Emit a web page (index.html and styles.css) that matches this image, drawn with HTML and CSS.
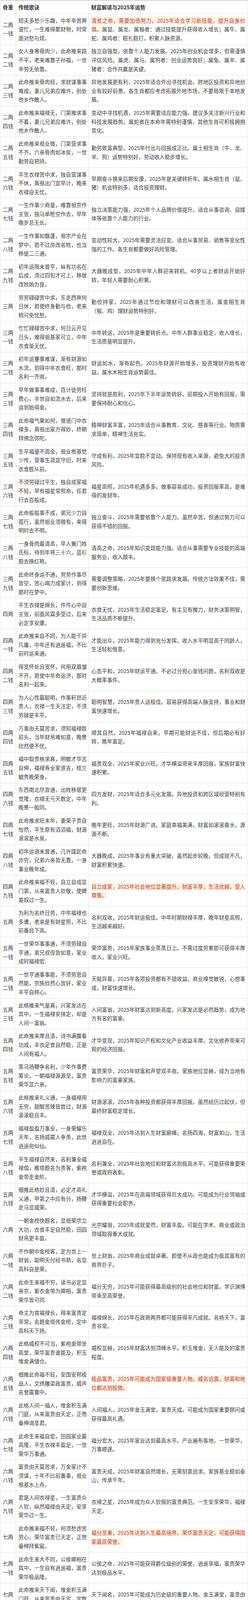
FILE: index.html
```html
<!DOCTYPE html>
<html lang="zh-CN">
<head>
<meta charset="utf-8">
<title>骨重财富解读与2025年运势</title>
<link rel="stylesheet" href="styles.css">
</head>
<body>
<table class="fortune">
<colgroup><col class="c1"><col class="c2"><col class="c3"></colgroup>
<thead>
<tr><th>骨重</th><th>传统歌诀</th><th>财富解读与2025年运势</th></tr>
</thead>
<tbody>
<tr><td class="w">二两一钱</td><td class="verse">短夫多愁少乐趣，中年辛苦奔波忙，一生难得聚财物，时常面对愁与烦。</td><td class="reading"><span class="hl">清贫之命，需要加倍努力。2025年适合学习新技能，提升自身价值。</span>属鼠、属龙、属猴者：通过技能提升获得收入增长；属牛、属蛇、属鸡者：稳扎稳打，积累人脉资源。</td></tr>
<tr><td class="w">二两二钱</td><td class="verse">女人身寒骨肉少，此命推来路不平，老来难靠子孙福，一世辛劳无依靠。</td><td class="reading">独立自强型，依靠个人能力发展。2025年创业机会增多，但需谨慎评估风险。属虎、属马、属狗者：创业运势良好；属兔、属羊、属猪者：合作共赢是关键。</td></tr>
<tr><td class="w">二两三钱</td><td class="verse">此命推来骨肉轻，求财谋事事难成，妻儿兄弟应难许，别处他乡作散人。</td><td class="reading">异地发展更有利，2025年适合外出寻找机会。跨地区投资和异地创业有较好前景。各生肖都应考虑拓展外地市场，不要局限于本地发展。</td></tr>
<tr><td class="w">二两四钱</td><td class="verse">此命推来福禄无，门第推求事不着，妻儿兄弟应难许，别处他乡作散人。</td><td class="reading">变动中寻找机遇，2025年需要适应能力强。建议多关注新兴行业和科技发展趋势。属蛇者在本命年需特别谨慎，其他生肖可积极拥抱变化。</td></tr>
<tr><td class="w">二两五钱</td><td class="verse">此命推来祖业微，门第营求事不齐，六亲骨肉如冰炭，一世勤劳自把持。</td><td class="reading">勤劳致富典型，2025年付出与回报成正比。属土相生肖（牛、龙、羊、狗）运势特别好，劳动收入稳步增长。</td></tr>
<tr><td class="w">二两六钱</td><td class="verse">平生衣禄苦中求，独自营谋事不休，离祖出门宜早计，晚来衣禄自无忧。</td><td class="reading">早期奋斗换来后期安康，2025年是关键转折年。属水相生肖（鼠、猪）机会特别多，适合投资理财。</td></tr>
<tr><td class="w">二两七钱</td><td class="verse">一生作事少商量，难靠祖宗作主张，独马单枪空作去，早年晚岁总无长。</td><td class="reading">独立决策能力强，2025年个人品牌价值提升。适合从事咨询、自媒体等依靠个人能力的行业。</td></tr>
<tr><td class="w">二两八钱</td><td class="verse">一生作事如飘蓬，祖宗产业在梦中，若不过房改名姓，也当移徙二三通。</td><td class="reading">变动性较大，2025年需要灵活应变。适合从事贸易、销售等变化性强的工作。各生肖都要做好风险管理。</td></tr>
<tr><td class="w">二两九钱</td><td class="verse">初年运限未曾亨，纵有功名在后成，须过四旬才可上，移居改姓始为良。</td><td class="reading">大器晚成型，2025年中年人群迎来转机。40岁以上者财运开始好转，年轻人需要耐心积累。</td></tr>
<tr><td class="w">三两</td><td class="verse">劳劳碌碌苦中求，东走西奔何日休，若使终身勤与俭，老来稍可免忧愁。</td><td class="reading">勤俭持家，2025年通过节俭和理财可以改善生活。属金相生肖（猴、鸡）理财运势特别好。</td></tr>
<tr><td class="w">三两一钱</td><td class="verse">忙忙碌碌苦中求，何日云开见日头，难得祖基家可立，中年衣食渐无忧。</td><td class="reading">中年转运，2025年是重要转折点。中年人群事业稳定，收入增长，生活质量明显提升。</td></tr>
<tr><td class="w">三两二钱</td><td class="verse">初年运蹇事难谋，渐有财源如水流，到得中年衣食旺，那时名利一齐收。</td><td class="reading">财运如水，渐有起色。2025年财源开始增多，投资理财开始有收益。属水木相生肖运势最佳。</td></tr>
<tr><td class="w">三两三钱</td><td class="verse">早年做事事难成，百计徒劳枉费心，半世自如流水去，后来运到始得金。</td><td class="reading">坚持就是胜利，2025年下半年运势转好。前期投入开始有回报，需要保持耐心和信心。</td></tr>
<tr><td class="w">三两四钱</td><td class="verse">此命福气果如何，僧道门中衣禄多，离祖出家方得妙，终朝拜佛念弥陀。</td><td class="reading">精神财富丰富，2025年适合从事教育、文化、慈善等行业。物质需求简单，精神生活充实。</td></tr>
<tr><td class="w">三两五钱</td><td class="verse">生平福量不周全，祖业根基觉少传，营事生涯宜守旧，时来衣食胜从前。</td><td class="reading">守成有利，2025年宜稳不宜动。保持现有收入来源，避免大的投资风险。</td></tr>
<tr><td class="w">三两六钱</td><td class="verse">不须劳碌过平生，独自成家福不轻，早有福星常照命，任君行去百般成。</td><td class="reading">福星高照，2025年机遇多多。做事容易成功，投资回报率高，是难得的发财年。</td></tr>
<tr><td class="w">三两七钱</td><td class="verse">此命般般事不成，弟兄少力自孤行，虽然祖业须微有，来得明时去不明。</td><td class="reading">独立奋斗，2025年需要依靠个人能力。虽然辛苦，但通过努力可以获得不错的回报。</td></tr>
<tr><td class="w">三两八钱</td><td class="verse">一身骨肉最清高，早入黉门姓氏标，待到年将三十六，蓝衫脱去换红袍。</td><td class="reading">清高之命，2025年知识变现能力强。适合从事需要专业技能的高端服务业，收入颇丰。</td></tr>
<tr><td class="w">三两九钱</td><td class="verse">此命终身运不通，劳劳作事尽皆空，苦心竭力成家计，到得那时在梦中。</td><td class="reading">需要调整策略，2025年要换个思路求发展。传统方法效果不佳，需要创新思维。</td></tr>
<tr><td class="w">四两</td><td class="verse">平生衣禄是绵长，件件心中自主张，前面风霜多受过，后来必定享安康。</td><td class="reading">衣食无忧，2025年生活稳定富足。有主见有魄力，财务决策明智，生活品质不断提升。</td></tr>
<tr><td class="w">四两一钱</td><td class="verse">此命推来自不同，为人能干异凡庸，中年还有逍遥福，不比前时运来通。</td><td class="reading">才能出众，2025年能力得到充分发挥。收入水平明显高于同龄人，生活轻松惬意。</td></tr>
<tr><td class="w">四两二钱</td><td class="verse">得宽怀处且宽怀，何用双眉皱不开，若使中年命运济，那时名利一起来。</td><td class="reading">心态平和，2025年财运亨通。不必过分担心金钱问题，名利双收是大概率事件。</td></tr>
<tr><td class="w">四两三钱</td><td class="verse">为人心性最聪明，作事轩昂近贵人，衣禄一生天注定，不须劳碌是丰亨。</td><td class="reading">聪明智慧，2025年贵人运极佳。容易获得高端人脉支持，事业和财富快速增长。</td></tr>
<tr><td class="w">四两四钱</td><td class="verse">万事由天莫苦求，须知福禄胜前头，当年财帛难如意，晚景欣然便不忧。</td><td class="reading">顺其自然，2025年福禄自来。早期可能财运不佳，但后期必有好转，晚年富足。</td></tr>
<tr><td class="w">四两五钱</td><td class="verse">福中取贵格求真，明敏才华志自伸，福禄寿全家道吉，桂兰毓秀晚荣身。</td><td class="reading">福贵双全，2025年家业兴旺。才华横溢带来丰厚回报，家族财富快速积累。</td></tr>
<tr><td class="w">四两六钱</td><td class="verse">东西南北尽皆通，出姓移居更觉隆，衣禄无亏天数定，中年晚景一般同。</td><td class="reading">四方发财，2025年适合多元化发展。异地投资和跨区域经营特别有利。</td></tr>
<tr><td class="w">四两七钱</td><td class="verse">此命推求旺末年，妻荣子贵自怡然，平生原有滔滔福，财源滚滚是水泉。</td><td class="reading">晚年更旺，2025年财源广进。家庭幸福美满，财富如滚滚春水，源源不断。</td></tr>
<tr><td class="w">四两八钱</td><td class="verse">初年运道未曾通，几许蹉跎命亦穷，兄弟六亲皆无靠，一身事业晚年成。</td><td class="reading">大器晚成，2025年事业有重大突破。虽然起步较晚，但成就不凡，财富积累快速。</td></tr>
<tr><td class="w">四两九钱</td><td class="verse">此命推来福不轻，自立自成显门第，从来富贵人钦敬，使婢差奴过一生。</td><td class="reading"><span class="hl">自立成家，2025年社会地位显著提升。财富丰厚，生活优越，受人尊敬。</span></td></tr>
<tr><td class="w">五两</td><td class="verse">为利为名终日劳，中年福禄也多遭，老来是有财星照，不比前番目下高。</td><td class="reading">名利双收，2025年财运极佳。中年时期财禄丰厚，晚年财星高照，生活越来越好。</td></tr>
<tr><td class="w">五两一钱</td><td class="verse">一世荣华事事通，不须劳碌自亨通，弟兄叔侄皆如意，家业成时福禄宏.</td><td class="reading">荣华富贵，2025年家族事业蒸蒸日上。不需过度劳累即可获得丰厚收入，家业兴旺。</td></tr>
<tr><td class="w">五两二钱</td><td class="verse">一世亨通事事能，不须劳思自然能，宗族欣然心皆好，家业丰亨自称心。</td><td class="reading">天赋异禀，2025年各项投资都有不错收益。商业嗅觉敏锐，心想事成，财富快速增长。</td></tr>
<tr><td class="w">五两三钱</td><td class="verse">此格推来气量真，兴家发达在其中，一生福禄安排定，却是人间一富翁。</td><td class="reading">人间富翁，2025年财富达到新高度。兴家发达是必然趋势，成为地方有名的富豪。</td></tr>
<tr><td class="w">五两四钱</td><td class="verse">此命推来厚且清，诗书满腹看功成，丰衣足食自然稳，正是人间有福人。</td><td class="reading">才华变现，2025年知识产权和文化产业收益丰厚。文化修养带来可观的经济回报。</td></tr>
<tr><td class="w">五两五钱</td><td class="verse">策马扬鞭争名利，少年作事费筹论，一朝福禄源源至，富贵荣华显六亲。</td><td class="reading">富贵荣华，2025年财富和声望双丰收。家族地位显赫，成为当地有影响力的富豪家族。</td></tr>
<tr><td class="w">五两六钱</td><td class="verse">此格推来礼义通，一身福禄用无穷，甜酸苦辣皆尝过，财源滚滚稳且丰。</td><td class="reading">财源滚滚，2025年各种投资都获得丰厚回报。虽然经历过起伏，但最终财富稳定增长。</td></tr>
<tr><td class="w">五两七钱</td><td class="verse">福禄盈盈万事全，一身荣耀乐天年，名扬威震人争羡，此世逍遥宛似仙。</td><td class="reading">福禄双全，2025年达到人生财富巅峰。名扬四海，财富如山，生活逍遥自在。</td></tr>
<tr><td class="w">五两八钱</td><td class="verse">平生福禄自然来，名利兼全福禄偕，雁塔题名为贵客，紫袍金带走金阶。</td><td class="reading">名利兼全，2025年社会地位和财富达到极高水平。可能获得重要荣誉或政府表彰。</td></tr>
<tr><td class="w">五两九钱</td><td class="verse">细推此格妙且清，必定才高礼义通，甲第之中应有分，扬鞭走马显威荣。</td><td class="reading">才华横溢，2025年在高端领域获得巨大成功。可能成为行业领袖或获得重要社会职务。</td></tr>
<tr><td class="w">六两</td><td class="verse">一朝金榜快题名，显祖荣宗立大功，衣食丰足自然稳，田园财帛更丰盈。</td><td class="reading">光宗耀祖，2025年成就斐然，财富丰盈。可能在学术、商业或政治领域取得重大成就。</td></tr>
<tr><td class="w">六两一钱</td><td class="verse">不作朝中金榜客，定为世上一财翁，聪明天付经书熟，名显高科自是荣。</td><td class="reading">世上财翁，2025年商业成就卓著。即使不从政也能成为极其富有的商界巨子。</td></tr>
<tr><td class="w">六两二钱</td><td class="verse">此命生来福不穷，读书必定显亲宗，紫衣金带为卿相，富贵荣华皆可同.</td><td class="reading">福分无穷，2025年可能获得最高级别的社会地位和财富。学识渊博带来至高荣誉。</td></tr>
<tr><td class="w">六两三钱</td><td class="verse">命主为官福禄长，得来富贵定非常，名题金塔传金榜，定中高科天下扬。</td><td class="reading">福禄绵长，2025年在政商两界都可能获得非凡成就。名扬天下，富贵非常。</td></tr>
<tr><td class="w">六两四钱</td><td class="verse">此格威权不可当，紫袍金带坐高堂，荣华富贵谁能及，积玉堆金满储仓。</td><td class="reading">威权显赫，2025年财富达到顶峰水平。积玉堆金，无人能及的富贵程度。</td></tr>
<tr><td class="w">六两五钱</td><td class="verse">细推此命福不轻，安国安邦极品人，文绣雕梁政富贵，威声名誉震寰中。</td><td class="reading"><span class="hl">极品富贵，2025年可能成为国家级重要人物。威名远震，财富和地位都达到极致。</span></td></tr>
<tr><td class="w">六两六钱</td><td class="verse">此格人间一福人，堆金积玉满门庭，从来富贵由天定，正笏垂绅谒圣君。</td><td class="reading">人间福人，2025年金玉满堂，富贵天成。可能成为国家重要顾问或获得最高礼遇。</td></tr>
<tr><td class="w">六两七钱</td><td class="verse">此命生来福自宏，田园家业最高隆，平生衣禄丰盈足，一世荣华万事通。</td><td class="reading">福分宏大，2025年家业达到最高水平。产业遍布各地，一世荣华，万事顺遂。</td></tr>
<tr><td class="w">六两八钱</td><td class="verse">富贵由天莫苦求，万金家计不须谋，十年不比前番事，祖业根基水上舟。</td><td class="reading">富贵天成，2025年财富自然增长，无需刻意追求。家族基业稳如泰山，传承千年。</td></tr>
<tr><td class="w">六两九钱</td><td class="verse">君是人间衣禄星，一生富贵众人钦，纵然福禄由天定，安享荣华过一生。</td><td class="reading">衣禄之星，2025年成为众人钦佩的富贵典范。一生安享荣华，福禄天定。</td></tr>
<tr><td class="w">七两</td><td class="verse">此命推来福不轻，何须愁虑苦劳心，荣华富贵已天定，正笏垂绅拜紫宸。</td><td class="reading"><span class="hl">福分至重，2025年达到人生最高境界。荣华富贵天定，可能获得国家最高荣誉。</span></td></tr>
<tr><td class="w">七两一钱</td><td class="verse">此命生来大不同，公侯卿相在其中，一生自有逍遥福，富贵荣华极品隆。</td><td class="reading">公侯之命，2025年可能获得爵位级别的荣誉。逍遥享福，富贵荣华达到极品水平。</td></tr>
<tr><td class="w">七两二钱</td><td class="verse">此命推来天下闻，堆金积玉满门庭，从来富贵由天定，定数必然是真人。</td><td class="reading">天下闻名，2025年可能成为历史级的重要人物。金玉满堂，富贵由天定，必为真正的圣贤或帝王。</td></tr>
</tbody>
</table>
</body>
</html>
```
FILE: styles.css
```css
html, body {
  margin: 0;
  padding: 0;
  background: #ffffff;
}

body {
  font-family: "Noto Sans CJK SC", "Noto Sans", sans-serif;
  font-size: 13.4px;
  color: #3d3d3d;
}

.fortune {
  width: 634px;
  border-collapse: collapse;
  table-layout: fixed;
  border-top: 2px solid #d2d2d2;
}

.c1 { width: 40px; }
.c2 { width: 186px; }

.fortune th,
.fortune td {
  border: 1px solid #e3e3e3;
  padding: 5px 5px 5px 6px;
  line-height: 22.6px;
  vertical-align: middle;
  text-align: left;
  text-spacing-trim: space-all;
  text-autospace: no-autospace;
}

.fortune th {
  font-weight: 700;
  color: #333333;
}

.fortune .verse {
  padding-right: 4px;
  text-align: justify;
}

.fortune .reading {
  padding: 5px 6px 5px 6.5px;
  text-align: justify;
}

.hl {
  color: #c0392b;
  background: #fef4e3;
}
```
